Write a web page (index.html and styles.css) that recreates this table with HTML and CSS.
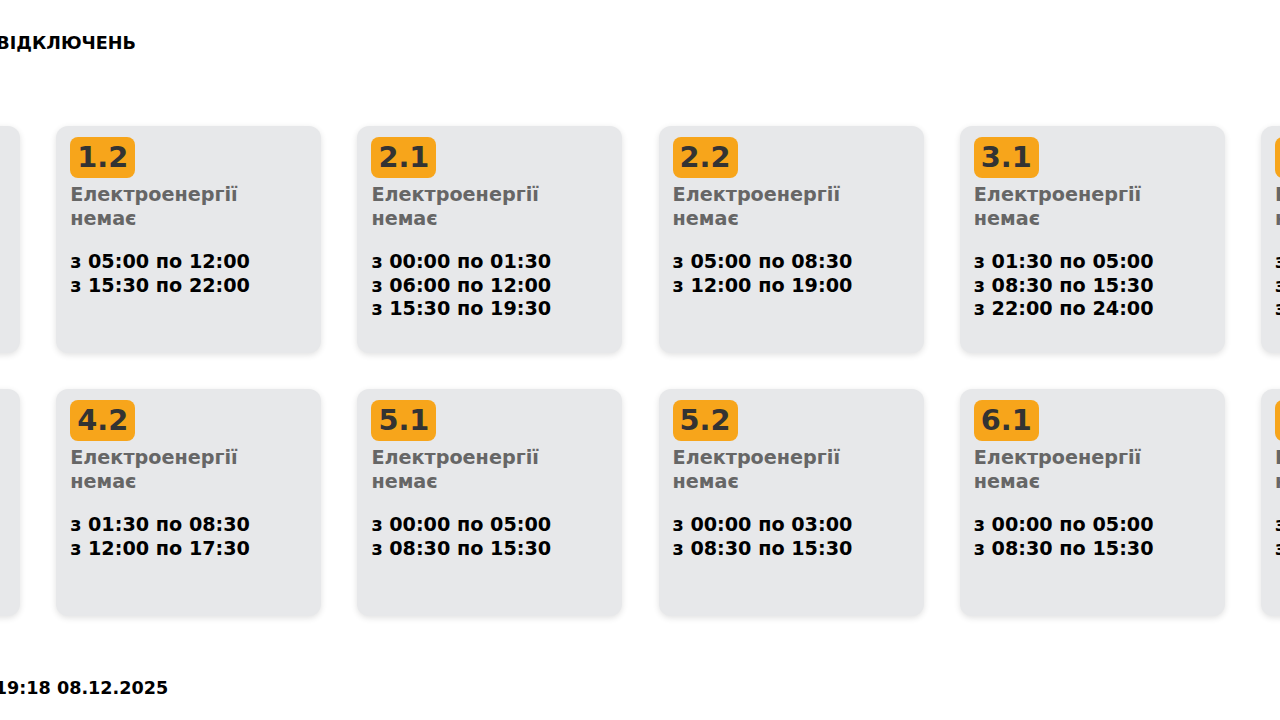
FILE: index.html
```html
<!DOCTYPE html>
<html lang="uk">
<head>
<meta charset="utf-8">
<title>Графік погодинних відключень</title>
<link rel="stylesheet" href="styles.css">
</head>
<body>
<div class="page">
  <div class="wrap">
    <h1 class="title">ГРАФІК ПОГОДИННИХ ВІДКЛЮЧЕНЬ</h1>
    <div class="grid">
      <div class="card"><span class="badge">1.1</span><div class="status">Електроенергії немає</div><div class="times"><div>з 00:00 по 03:00</div><div>з 08:30 по 15:30</div><div>з 19:00 по 22:00</div></div></div>
      <div class="card"><span class="badge">1.2</span><div class="status">Електроенергії немає</div><div class="times"><div>з 05:00 по 12:00</div><div>з 15:30 по 22:00</div></div></div>
      <div class="card"><span class="badge">2.1</span><div class="status">Електроенергії немає</div><div class="times"><div>з 00:00 по 01:30</div><div>з 06:00 по 12:00</div><div>з 15:30 по 19:30</div></div></div>
      <div class="card"><span class="badge">2.2</span><div class="status">Електроенергії немає</div><div class="times"><div>з 05:00 по 08:30</div><div>з 12:00 по 19:00</div></div></div>
      <div class="card"><span class="badge">3.1</span><div class="status">Електроенергії немає</div><div class="times"><div>з 01:30 по 05:00</div><div>з 08:30 по 15:30</div><div>з 22:00 по 24:00</div></div></div>
      <div class="card"><span class="badge">3.2</span><div class="status">Електроенергії немає</div><div class="times"><div>з 01:30 по 05:00</div><div>з 08:30 по 15:30</div><div>з 22:00 по 24:00</div></div></div>
      <div class="card"><span class="badge">4.1</span><div class="status">Електроенергії немає</div><div class="times"><div>з 01:30 по 08:30</div><div>з 12:00 по 17:30</div></div></div>
      <div class="card"><span class="badge">4.2</span><div class="status">Електроенергії немає</div><div class="times"><div>з 01:30 по 08:30</div><div>з 12:00 по 17:30</div></div></div>
      <div class="card"><span class="badge">5.1</span><div class="status">Електроенергії немає</div><div class="times"><div>з 00:00 по 05:00</div><div>з 08:30 по 15:30</div></div></div>
      <div class="card"><span class="badge">5.2</span><div class="status">Електроенергії немає</div><div class="times"><div>з 00:00 по 03:00</div><div>з 08:30 по 15:30</div></div></div>
      <div class="card"><span class="badge">6.1</span><div class="status">Електроенергії немає</div><div class="times"><div>з 00:00 по 05:00</div><div>з 08:30 по 15:30</div></div></div>
      <div class="card"><span class="badge">6.2</span><div class="status">Електроенергії немає</div><div class="times"><div>з 00:00 по 05:00</div><div>з 08:30 по 15:30</div></div></div>
    </div>
    <p class="updated">Дата оновлення: 19:18 08.12.2025</p>
  </div>
</div>
</body>
</html>
```
FILE: styles.css
```css
html, body {
  margin: 0;
  padding: 0;
  overflow: hidden;
  background: #ffffff;
}

body {
  font-family: "DejaVu Sans", sans-serif;
  color: #000;
}

.page {
  display: flex;
  justify-content: center;
  width: 100%;
}

.wrap {
  flex: 0 0 auto;
  width: 1770px;
  display: flex;
  flex-direction: column;
}

.title {
  margin: 32px 0 0 9px;
  font-size: 17.6px;
  font-weight: bold;
  line-height: 22px;
}

.grid {
  margin-top: 72px;
  display: grid;
  grid-template-columns: repeat(6, 265px);
  column-gap: 36.2px;
  row-gap: 36px;
}

.card {
  box-sizing: border-box;
  height: 227px;
  padding: 11px 14px;
  background: #e7e8ea;
  border-radius: 12px;
  box-shadow: 0 2px 6px rgba(0, 0, 0, 0.12);
  display: flex;
  flex-direction: column;
  align-items: flex-start;
}

.badge {
  display: inline-block;
  background: #f7a51b;
  color: #333333;
  font-size: 28.8px;
  font-weight: bold;
  line-height: 33px;
  padding: 4px 7px;
  border-radius: 8px;
}

.status {
  margin-top: 5px;
  font-size: 19.2px;
  font-weight: bold;
  line-height: 23.5px;
  color: #666666;
}

.times {
  margin-top: 20px;
  font-size: 19.2px;
  font-weight: bold;
  line-height: 23.5px;
  color: #000;
}

.updated {
  margin: 61px 0 0 63px;
  font-size: 17.6px;
  font-weight: bold;
  line-height: 22px;
}
```
